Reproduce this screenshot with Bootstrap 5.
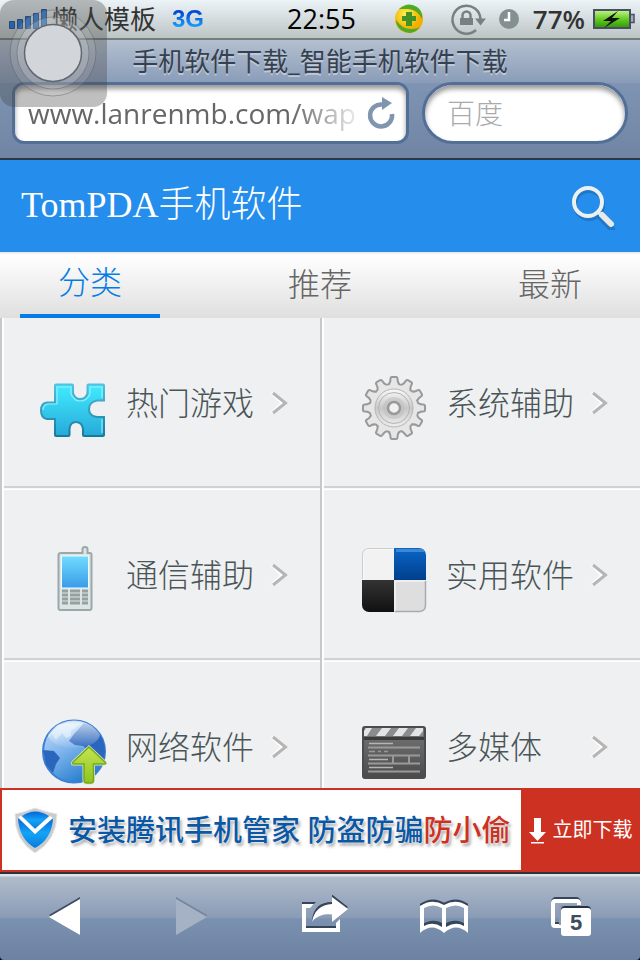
<!DOCTYPE html>
<html lang="zh-CN">
<head>
<meta charset="utf-8">
<meta name="viewport" content="width=device-width, initial-scale=1">
<title>手机软件下载_智能手机软件下载</title>
<link href="https://cdn.jsdelivr.net/npm/bootstrap@5.3.0/dist/css/bootstrap.min.css" rel="stylesheet">
<style>
body{background:#000;font-family:"Open Sans","Noto Sans CJK SC",sans-serif;color:#333}
svg{display:block;flex:none}
.status-bar{height:40px;background:linear-gradient(#edf4f7,#bcc4c6);border-bottom:2px solid #737e7b;padding:0 5px 0 8px;font-size:26px;line-height:38px;box-shadow:0 1px #dce3e6}
.status-side{flex:1 1 0}
.carrier{font-weight:400;color:#333}
.net-type{font-family:"Liberation Sans",sans-serif;font-weight:700;font-size:24px;background:linear-gradient(#003bd0 25%,#18a8ff 75%);-webkit-background-clip:text;background-clip:text;color:transparent}
.clock-text{color:#000;font-weight:500;font-size:27px}
.battery-text{font-weight:600;font-size:26px}
.browser-top{background:linear-gradient(#b4c0d0,#8a9cb8 36%,#7f94b2 37%,#7085a4);border-bottom:2px solid #2d3748;padding:0 12px 14px}
.page-title{font-size:26px;line-height:42px;font-weight:400;color:#36414f;text-shadow:0 2px 0 #bfc9d8}
.bar-form{gap:13px}
.url-box,.search-box{height:62px;background:#fff;border:3px solid #526f98;box-shadow:inset 0 4px 5px #999}
.url-box{flex:1 1 0;min-width:0;border-radius:12px;padding:0 10px 0 13px}
.search-box{flex:0 0 206px;border-radius:31px;padding:0 22px}
.url-box input,.search-box input{border:0;background:none;outline:0;min-width:0;width:100%;padding:0}
.url-box input{font-size:28px;color:#666;-webkit-mask-image:linear-gradient(90deg,#000 78%,transparent);mask-image:linear-gradient(90deg,#000 78%,transparent)}
.search-box input{font-size:28px;font-weight:300}
.search-box input::placeholder{color:#aaa;opacity:1}
.app-head{background:#258deb;height:92px;padding:0 22px 0 21px}
.app-head h1{font-family:"Liberation Serif","Noto Sans CJK SC",serif;font-size:36px;font-weight:300;color:#fff}
.app-tabs{height:66px;padding:0 20px;background:linear-gradient(#e6e6e6,#fff 3px,#dfdfdf)}
.app-tabs a{width:140px;font-size:32px;font-weight:300;line-height:64px;color:#666;text-align:center;text-decoration:none}
.app-tabs a.active{color:#057ce5;border-bottom:4px solid #057ce5;line-height:60px}
.tile-area{background:#eff0f2;overflow-y:auto;scrollbar-width:none;min-height:0}
.tile-area::-webkit-scrollbar{display:none}
.tile{height:172px;padding:0 0 2px 36px;border-left:2px solid #c6c8cb;box-shadow:inset 2px 0 #fff;color:#4a5557;text-decoration:none;position:relative;font-size:32px;font-weight:300}
.tile::after{content:"";position:absolute;left:2px;right:0;bottom:0;height:4px;background:linear-gradient(#cfd1d3 50%,#eff0f2 50%,#fff 75%);z-index:1}
.tile svg.pic{width:68px;height:68px;margin:10px 18px 0 2px}
.tile .tile-name{width:144px}
.promo{height:84px;background:#fff;border:2px solid #cd3122;border-right:0;text-decoration:none;font-size:29px;font-weight:500;color:#0a58a5;white-space:nowrap}
.promo .slogan{text-shadow:0 0 2px #fff,2px 3px 3px #aaa}
.promo .hot{color:#cd3122}
.promo .get{background:#cd3122;color:#fff;font-size:20px;font-weight:400;width:119px;gap:6px}
.browser-bottom{height:88px;border-top:2px solid #2e343c;background:linear-gradient(#dfe3e8 2px,#afbccb 3px,#8a9bb5 51%,#7b91b0 52%,#6d82a2);padding:0 6px 2px 2px;border-radius:0 0 4px 4px}
.touch-ball{position:absolute;left:0;top:0;width:107px;height:107px;border:0;padding:0;background:none;z-index:5}
</style>
<script src="https://cdn.jsdelivr.net/npm/bootstrap@5.3.0/dist/js/bootstrap.bundle.min.js"></script>
</head>
<body>
<svg class="position-absolute" width="0" height="0" aria-hidden="true"><symbol id="chev" viewBox="270 391 20 24"><path d="M272 393l10 10-10 10" stroke="#fff" stroke-width="3" fill="none"/><path d="M273 393l12.500 10-12.500 10" fill="none" stroke="#b7b5b4" stroke-width="3"/></symbol></svg>
<div class="vh-100 d-flex flex-column overflow-hidden">
  <div class="status-bar d-flex align-items-center flex-shrink-0">
    <div class="status-side d-flex align-items-center">
      <svg width="40" height="24" viewBox="7 7 40 24"><g fill="#1d74d6" stroke="#164e96"><path d="M8.500 21.500h5v7h-5zM16.500 19.500h5v9h-5zM24.500 16.500h5v12h-5zM32.500 13.500h5v15h-5zM40.500 9.500h5v19h-5z"/></g></svg>
      <span class="carrier ms-1">懒人模板</span><span class="net-type ms-3">3G</span>
    </div>
    <span class="clock-text">22:55</span>
    <div class="status-side d-flex align-items-center justify-content-end">
      <svg width="128" height="34" viewBox="394 2 128 34">
        <defs><radialGradient id="ball" cx=".4" cy=".35"><stop offset="0" stop-color="#fff45a"/><stop offset="1" stop-color="#f3ae00"/></radialGradient></defs>
        <circle cx="410" cy="19" r="14" fill="url(#ball)"/>
        <path d="M400 9Q409 1 418 7Q424 11 423 19Q418 9 409 9Q404 9 400 9zM421 27Q413 37 402 30Q397 26 397 20Q404 30 413 29Q418 29 421 27z" fill="#4dab24"/>
        <path d="M407 12h6v4h4v5h-4v5h-6v-5h-4v-5h4z" fill="#419324"/>
        <g fill="none" stroke="#77817f" stroke-width="2.500"><path d="M477 30A14 14 0 1 1 481.500 19"/><path d="M463.500 19v-3.500a4 4 0 0 1 8 0V19"/></g>
        <path d="M461 18h13v7h-13zM476 18.500h11l-5.500 7z" fill="#77817f"/>
        <circle cx="510" cy="19" r="10" fill="#84908f"/><path d="M510 12v8h-5" fill="none" stroke="#fff" stroke-width="2.500"/>
      </svg>
      <span class="battery-text mx-2 ps-1">77%</span>
      <svg width="42" height="22" viewBox="592 8 42 22"><defs><linearGradient id="bat" x2="0" y2="1"><stop stop-color="#c5f58c"/><stop offset=".5" stop-color="#66cc22"/><stop offset="1" stop-color="#2d9706"/></linearGradient></defs><rect x="593" y="10" width="36" height="18" fill="url(#bat)" stroke="#4a4d66" stroke-width="2"/><path d="M630 14.500h3v8h-3" fill="#aab" stroke="#4a4d66" stroke-width="1.500"/><path d="M617 11L602 21h8l-7 7 16-10h-8z" fill="#111"/></svg>
    </div>
  </div>

  <header class="browser-top flex-shrink-0">
    <div class="page-title text-center">手机软件下载_智能手机软件下载</div>
    <form class="bar-form d-flex" onsubmit="return false">
      <div class="url-box d-flex align-items-center">
        <input type="text" aria-label="网址" value="www.lanrenmb.com/wap">
        <button type="button" class="btn p-0 border-0" aria-label="刷新"><svg width="30" height="32" viewBox="366 98 30 32"><path d="M382.500 105.500A11 11 0 1 0 392 115" fill="none" stroke="#8295af" stroke-width="4.500"/><path d="M382 98l10 6-10 7z" fill="#8295af"/></svg></button>
      </div>
      <div class="search-box d-flex align-items-center"><input type="text" aria-label="百度搜索" placeholder="百度"></div>
    </form>
  </header>

  <div class="app-head d-flex align-items-center justify-content-between flex-shrink-0">
    <h1 class="m-0">TomPDA手机软件</h1>
    <button type="button" class="btn p-0 border-0" aria-label="搜索"><svg width="48" height="48" viewBox="570 181 48 48"><g fill="none" stroke-linecap="round"><g stroke="#145da5" opacity=".45" transform="translate(1 3)"><circle cx="588" cy="201" r="14" stroke-width="4"/><path d="M599 213L611 225" stroke-width="6"/></g><circle cx="588" cy="201" r="14" stroke="#eef0ee" stroke-width="4"/><path d="M598 211l4 4" stroke="#eef0ee" stroke-width="3"/><path d="M602 214L611 223" stroke="#e9e9e5" stroke-width="6"/></g></svg></button>
  </div>
  <nav class="app-tabs d-flex justify-content-between flex-shrink-0">
    <a href="#" class="active">分类</a><a href="#">推荐</a><a href="#">最新</a>
  </nav>

  <main class="tile-area flex-fill">
    <div class="row row-cols-2 g-0">
      <div class="col"><a href="#" class="tile d-flex align-items-center">
        <svg class="pic" viewBox="40 374 68 68"><defs><linearGradient id="pz" x2="0" y2="1"><stop stop-color="#41ecff"/><stop offset="1" stop-color="#27a9d9"/></linearGradient><linearGradient id="pe" x2="0" y2="1"><stop stop-color="#54bfdf"/><stop offset="1" stop-color="#167a9b"/></linearGradient></defs>
        <path d="M56 384.500H72a1 1 0 0 1 1 1V393Q75 399 80 399Q86 399 87.500 393V385.500a1 1 0 0 1 1-1H103a1 1 0 0 1 1 1V400.500H97Q89 402 89 409Q89 416 97 417H104V435a1 1 0 0 1-1 1H84a1 1 0 0 1-1-1V429Q82 422 76 422Q70 422 69.500 429V435a1 1 0 0 1-1 1H56a1 1 0 0 1-1-1V419H47Q41 418 41 410.500Q41 403 47 402.500H55V385.500a1 1 0 0 1 1-1z" fill="url(#pz)" stroke="url(#pe)" stroke-width="2"/><path d="M57 404V387H71V394Q74 401 80 401Q87 401 90 394V387H102V398M57 404H48Q43 405 43 410M102 419V433" fill="none" stroke="#a8f5ff" stroke-width="1.200" opacity=".8"/></svg>
        <span class="tile-name">热门游戏</span><svg width="20" height="24"><use href="#chev"/></svg>
      </a></div>
      <div class="col"><a href="#" class="tile d-flex align-items-center">
        <svg class="pic" viewBox="360 374 68 68"><defs><path id="tooth" d="M386 386Q390.500 384 390.500 379Q390.500 377 392 377H396Q397.500 377 397.500 379Q397.500 384 402 386"/><linearGradient id="gr" x2="0" y2="1"><stop stop-color="#fafafa"/><stop offset=".5" stop-color="#c8c8c8"/><stop offset="1" stop-color="#eee"/></linearGradient>
        <g id="teeth"><use href="#tooth"/><use href="#tooth" transform="rotate(30 394 408)"/><use href="#tooth" transform="rotate(60 394 408)"/><use href="#tooth" transform="rotate(90 394 408)"/><use href="#tooth" transform="rotate(120 394 408)"/><use href="#tooth" transform="rotate(150 394 408)"/><use href="#tooth" transform="rotate(180 394 408)"/><use href="#tooth" transform="rotate(210 394 408)"/><use href="#tooth" transform="rotate(240 394 408)"/><use href="#tooth" transform="rotate(270 394 408)"/><use href="#tooth" transform="rotate(300 394 408)"/><use href="#tooth" transform="rotate(330 394 408)"/></g></defs>
        <use href="#teeth" fill="#e6e6e6" stroke="#999" stroke-width="2"/><circle cx="394" cy="408" r="23.500" fill="#e6e6e6"/><circle cx="394" cy="408" r="19" fill="url(#gr)" stroke="#b5b5b5"/><circle cx="394" cy="408" r="15.500" fill="none" stroke="#b5b5b5"/><circle cx="394" cy="408" r="11" fill="#bbb" opacity=".5"/><circle cx="394" cy="408" r="6" fill="#f0f1f2" stroke="#999" stroke-width="2.500"/></svg>
        <span class="tile-name">系统辅助</span><svg width="20" height="24"><use href="#chev"/></svg>
      </a></div>
      <div class="col"><a href="#" class="tile d-flex align-items-center">
        <svg class="pic" viewBox="40 546 68 68"><defs><linearGradient id="scr" x2="0" y2="1"><stop stop-color="#70dcff"/><stop offset="1" stop-color="#3a9be8"/></linearGradient></defs><path d="M61 553H82.500V549Q82.500 547 85 547T87.500 549V553H90Q91.500 553 91.500 555V608Q91.500 610 89.500 610H60.500Q58.500 610 58.500 608V555Q58.500 553 61 553z" fill="#dce5e4" stroke="#9aa9a7" stroke-width="2"/><rect x="61.500" y="556" width="27" height="32" fill="url(#scr)" stroke="#eefaff"/><path d="M62 591h6M62 595h6M62 599h6M62 603h6M70 591h10M70 595h10M70 599h10M70 603h10M82 591h6M82 595h6M82 599h6M82 603h6" stroke="#93a29f" stroke-width="2.800"/></svg>
        <span class="tile-name">通信辅助</span><svg width="20" height="24"><use href="#chev"/></svg>
      </a></div>
      <div class="col"><a href="#" class="tile d-flex align-items-center">
        <svg class="pic" viewBox="360 546 68 68"><defs><linearGradient id="bl" x2="0" y2="1"><stop stop-color="#0a64c8"/><stop offset="1" stop-color="#00408c"/></linearGradient><linearGradient id="bk" x2="0" y2="1"><stop stop-color="#333"/><stop offset="1" stop-color="#111"/></linearGradient><clipPath id="sq"><rect x="362" y="548" width="64" height="64" rx="7"/></clipPath></defs><g clip-path="url(#sq)"><path d="M362 548h32v32h-32z" fill="#f2f2f2"/><path d="M394 580h32v32h-32z" fill="#dedede"/><path d="M394 548h32v32h-32z" fill="url(#bl)"/><path d="M362 580h32v32h-32z" fill="url(#bk)"/><path d="M395 611V581H426M363 580V549H393" fill="none" stroke="#fff"/><path d="M396 550.500h28" stroke="#3d86d3" stroke-width="3"/></g><path d="M362.500 579v-24q0-6.500 6.500-6.500h24" fill="none" stroke="#ccc"/><path d="M395 611.500h24q6.500 0 6.500-6.500v-24" fill="none" stroke="#aaa" stroke-width="1.500"/></svg>
        <span class="tile-name">实用软件</span><svg width="20" height="24"><use href="#chev"/></svg>
      </a></div>
      <div class="col"><a href="#" class="tile d-flex align-items-center">
        <svg class="pic" viewBox="40 717 68 68"><defs><linearGradient id="sea" x1=".1" x2=".7" y2="1"><stop stop-color="#c5dcf7"/><stop offset=".45" stop-color="#7fb5ec"/><stop offset="1" stop-color="#1f79cc"/></linearGradient><linearGradient id="shine" x2="0" y2="1"><stop stop-color="#fff" stop-opacity=".75"/><stop offset="1" stop-color="#fff" stop-opacity=".05"/></linearGradient><linearGradient id="ga" x2="0" y2="1"><stop stop-color="#c2e650"/><stop offset="1" stop-color="#8fc31f"/></linearGradient><clipPath id="gc"><circle cx="74" cy="750.500" r="31"/></clipPath></defs><circle cx="74" cy="750.500" r="31" fill="url(#sea)" stroke="#3c7fd6" stroke-width="2"/><g clip-path="url(#gc)"><path d="M69 740L74 733L84 722L98 728L106 742V764H94L90 750L83 745L75 744zM43 749L54 750L60 757L56 763L53 772L46 764z" fill="#2b66bd"/><path d="M45 739L52 733L56 739L62 732L66 737L71 735V730L80 723H58z" fill="#d7e9fc" opacity=".7"/><ellipse cx="74" cy="733" rx="26" ry="14" fill="url(#shine)"/></g><path d="M89 746L73 761Q71 763 74 763H84V779Q84 782 87 782H91Q93.500 782 93.500 779V763H104Q107 763 105 761z" fill="url(#ga)" stroke="#dce9d0" stroke-width="3"/><path d="M89 746L73 761Q71 763 74 763H84V779Q84 782 87 782H91Q93.500 782 93.500 779V763H104Q107 763 105 761z" fill="url(#ga)" stroke="#76a81c" stroke-width="1.500"/></svg>
        <span class="tile-name">网络软件</span><svg width="20" height="24"><use href="#chev"/></svg>
      </a></div>
      <div class="col"><a href="#" class="tile d-flex align-items-center">
        <svg class="pic" viewBox="360 718 68 68"><defs><linearGradient id="cl" x2="0" y2="1"><stop stop-color="#777"/><stop offset="1" stop-color="#4a4a4a"/></linearGradient></defs><rect x="363" y="727" width="62" height="51" rx="2" fill="url(#cl)" stroke="#4c4c4c" stroke-width="2"/><path d="M365 728h58v8h-58z" fill="#8c8c8c"/><path d="M364 736v-5l2-3h6l-5 8zM376 736l6-8h9l-6 8zM393 736l6-8h9l-6 8zM410 736l6-8h7v3l-4 5z" fill="#e4e4e4"/><path d="M364 738.500h60" stroke="#3c3c3c" stroke-width="3"/><path d="M368 747.500h52M368 755.500h52M368 763.500h52M368 771.500h52M393 756v7M409 756v7" stroke="#999" stroke-width="2"/><path d="M369 743.500h24M369 767.500h24M369 759.500h19" stroke="#b5b5b5" stroke-width="1.500"/><path d="M369 751.500h6m3 0h3m3 0h4" stroke="#999" stroke-width="1.500"/></svg>
        <span class="tile-name">多媒体</span><svg width="20" height="24"><use href="#chev"/></svg>
      </a></div>
    </div>
  </main>

  <a href="#" class="promo d-flex align-items-stretch flex-shrink-0">
    <span class="flex-fill d-flex align-items-center">
      <svg class="ms-2 me-2" width="50" height="50" viewBox="10 805 50 50"><defs><linearGradient id="sh" x2="0" y2="1"><stop stop-color="#0563d8"/><stop offset=".5" stop-color="#13a5f7"/><stop offset="1" stop-color="#0a79db"/></linearGradient></defs><path d="M15 814Q25 812 35 808Q46 812 57 814Q57 840 35 853Q14 840 15 814z" fill="#c8cbcd" stroke="#e8e8e8"/><path d="M22 816Q35 807 49 816L35 829z" fill="url(#sh)"/><path d="M18 818L35 834L53 818Q52 839 35 848Q19 839 18 818z" fill="url(#sh)"/><path d="M18 817L21 816L35 829L50 816L53 818L35 834z" fill="#fff"/></svg>
      <span class="slogan">安装腾讯手机管家 防盗防骗<span class="hot">防小偷</span></span>
    </span>
    <span class="get d-flex align-items-center justify-content-center"><svg width="18" height="28" viewBox="530 816 18 28"><path d="M535 818h7v14h5l-8.500 9-8.500-9h5zM532 842h13v1.500h-13z" fill="#fff"/></svg>立即下载</span>
  </a>

  <footer class="browser-bottom flex-shrink-0"><div class="row row-cols-5 g-0 h-100 text-center">
    <button type="button" class="col btn p-0 border-0 d-flex align-items-center justify-content-center" aria-label="后退"><svg width="34" height="42" viewBox="48 895 34 42"><path d="M49 915L80 897V935z" fill="#3c4c61"/><path d="M49 917L80 899V935z" fill="#fff"/></svg></button>
    <button type="button" class="col btn p-0 border-0 d-flex align-items-center justify-content-center" aria-label="前进"><svg width="34" height="42" viewBox="177 895 34 42"><path d="M178 897L209 915 209 917 178 899z" fill="#73849d"/><path d="M178 899L209 917L178 935z" fill="#a5b2c5"/></svg></button>
    <button type="button" class="col btn p-0 border-0 d-flex align-items-center justify-content-center" aria-label="分享"><svg width="60" height="42" viewBox="288 895 60 42"><g fill="#35455a"><path d="M302 902h14l-4 4h-10zM306 926h31v3h-31zM312 920Q314 902 332 902V894.500L348 907 332 921V914Q318 913 312 922z"/></g><path d="M302 904h12l-4 4h-4v20h30v-5l4-4v13h-38zM312 922Q315 905 332 904V897L348 909 332 922V914.500Q319 913 312 922z" fill="#fff"/></svg></button>
    <button type="button" class="col btn p-0 border-0 d-flex align-items-center justify-content-center" aria-label="书签"><svg width="50" height="42" viewBox="419 895 50 42"><g fill="none" stroke="#35455a" stroke-width="4"><path d="M422 930V905Q433 898 444 905Q456 898 466 905V930M422 927Q433 919 444 926.500Q456 919 466 927M444 905V929"/></g><path d="M420 933V906Q432 898 444 905Q456 898 468 906V933Q456 922 444 933Q432 922 420 933zM424 926Q433 921 442 927V908Q433 903 424 908zM446 927Q456 921 464 926V908Q456 903 446 908z" fill="#fff" fill-rule="evenodd"/></svg></button>
    <button type="button" class="col btn p-0 border-0 d-flex align-items-center justify-content-center" aria-label="标签页"><svg width="42" height="42" viewBox="549 895 42 42"><rect x="552" y="899" width="26" height="27" rx="3" fill="none" stroke="#35455a" stroke-width="4"/><rect x="552" y="901" width="26" height="25" rx="2" fill="none" stroke="#fff" stroke-width="4"/><path d="M554 922h4v2h-4z" fill="#35455a"/><path d="M558 905h22v20h-22z" fill="#8b9db7"/><rect x="560" y="906" width="30" height="28" rx="4" fill="#263345"/><rect x="560" y="908" width="30" height="28" rx="3" fill="#fff"/><text x="575" y="930" text-anchor="middle" font-family="Liberation Sans,sans-serif" font-size="22" font-weight="700" fill="#3c4c61">5</text></svg></button>
  </div></footer>
</div>
<button type="button" class="touch-ball" aria-label="辅助触控"><svg width="107" height="107" viewBox="0 0 107 107"><rect width="107" height="107" rx="14" fill="#444" fill-opacity=".34"/><circle cx="53" cy="53" r="43" fill="#fff" fill-opacity=".1" stroke="#555" stroke-opacity=".4"/><circle cx="53" cy="53" r="36" fill="#fff" fill-opacity=".18" stroke="#555" stroke-opacity=".4"/><circle cx="53" cy="53" r="28.500" fill="#d2d5da" stroke="#62676e" stroke-width="1.500"/></svg></button>
</body>
</html>
